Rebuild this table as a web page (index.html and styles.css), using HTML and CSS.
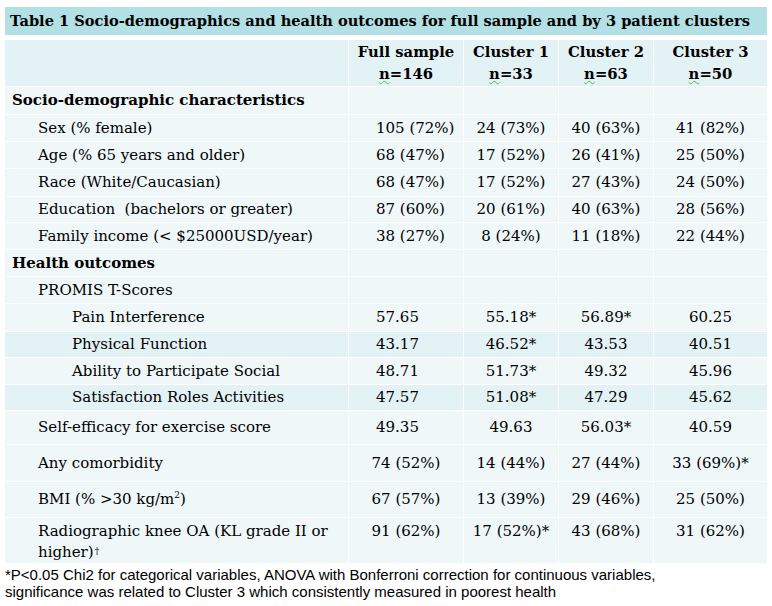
FILE: index.html
```html
<!DOCTYPE html>
<html>
<head>
<meta charset="utf-8">
<link rel="stylesheet" href="styles.css">
</head>
<body>
<div class="page">
  <div class="title">Table 1 Socio-demographics and health outcomes for full sample and by 3 patient clusters</div>
  <table class="tbl">
    <colgroup>
      <col class="c-label"><col class="c-full"><col class="c-cl"><col class="c-cl"><col class="c-cl3">
    </colgroup>
    <tr class="head">
      <th></th>
      <th>Full sample<br><span class="sq">n</span>=146</th>
      <th>Cluster 1<br><span class="sq">n</span>=33</th>
      <th>Cluster 2<br><span class="sq">n</span>=63</th>
      <th>Cluster 3<br><span class="sq">n</span>=50</th>
    </tr>
    <tr class="h28"><td class="sec">Socio-demographic characteristics</td><td></td><td></td><td></td><td></td></tr>
    <tr class="h27"><td class="l1">Sex (% female)</td><td class="fl">105 (72%)</td><td>24 (73%)</td><td>40 (63%)</td><td>41 (82%)</td></tr>
    <tr class="h27"><td class="l1">Age (% 65 years and older)</td><td class="fl">68 (47%)</td><td>17 (52%)</td><td>26 (41%)</td><td>25 (50%)</td></tr>
    <tr class="h28"><td class="l1">Race (White/Caucasian)</td><td class="fl">68 (47%)</td><td>17 (52%)</td><td>27 (43%)</td><td>24 (50%)</td></tr>
    <tr class="h26"><td class="l1">Education &nbsp;(bachelors or greater)</td><td class="fl">87 (60%)</td><td>20 (61%)</td><td>40 (63%)</td><td>28 (56%)</td></tr>
    <tr class="h27"><td class="l1">Family income (&lt; $25000USD/year)</td><td class="fl">38 (27%)</td><td>8 (24%)</td><td>11 (18%)</td><td>22 (44%)</td></tr>
    <tr class="h27"><td class="sec">Health outcomes</td><td></td><td></td><td></td><td></td></tr>
    <tr class="h27"><td class="l1">PROMIS T-Scores</td><td></td><td></td><td></td><td></td></tr>
    <tr class="h28"><td class="l2">Pain Interference</td><td class="fl">57.65</td><td>55.18*</td><td>56.89*</td><td>60.25</td></tr>
    <tr class="h26 dark"><td class="l2">Physical Function</td><td class="fl">43.17</td><td>46.52*</td><td>43.53</td><td>40.51</td></tr>
    <tr class="h27"><td class="l2">Ability to Participate Social</td><td class="fl">48.71</td><td>51.73*</td><td>49.32</td><td>45.96</td></tr>
    <tr class="h26 dark"><td class="l2">Satisfaction Roles Activities</td><td class="fl">47.57</td><td>51.08*</td><td>47.29</td><td>45.62</td></tr>
    <tr class="h34"><td class="l1">Self-efficacy for exercise score</td><td class="fl">49.35</td><td>49.63</td><td>56.03*</td><td>40.59</td></tr>
    <tr class="h37"><td class="l1">Any comorbidity</td><td>74 (52%)</td><td>14 (44%)</td><td>27 (44%)</td><td>33 (69%)*</td></tr>
    <tr class="h36"><td class="l1">BMI (% &gt;30 kg/m<span class="sup">2</span>)</td><td>67 (57%)</td><td>13 (39%)</td><td>29 (46%)</td><td>25 (50%)</td></tr>
    <tr class="h45 top"><td class="l1"><span class="ln">Radiographic knee OA (KL grade II or</span> <span class="ln">higher)<span class="sup dag">†</span></span></td><td>91 (62%)</td><td>17 (52%)*</td><td>43 (68%)</td><td>31 (62%)</td></tr>
  </table>
  <p class="note">*P&lt;0.05 Chi2 for categorical variables, ANOVA with Bonferroni correction for continuous variables, significance was related to Cluster 3 which consistently measured in poorest health</p>
</div>
</body>
</html>
```

FILE: styles.css
```css
html, body {
  margin: 0;
  padding: 0;
  background: #ffffff;
}

.page {
  padding: 7px 0 0 4px;
  width: 764px;
  color: #000000;
  font-family: "DejaVu Serif", "Liberation Serif", serif;
}

.title {
  margin-left: 1px;
  width: 757px;
  height: 28px;
  line-height: 28px;
  padding-left: 5px;
  background: #b3e0e4;
  font-weight: bold;
  font-size: 14.6px;
  white-space: nowrap;
}

.tbl {
  margin-top: 4px;
  width: 764px;
  table-layout: fixed;
  border-collapse: separate;
  border-spacing: 1px;
  font-size: 15px;
}

.c-label { width: 343px; }
.c-full { width: 114px; }
.c-cl { width: 94px; }
.c-cl3 { width: 113px; }

.tbl th,
.tbl td {
  padding: 0;
  background: #eff7f9;
  text-align: center;
  vertical-align: middle;
  white-space: nowrap;
  line-height: 21px;
}

.tbl .head th {
  height: 46px;
  background: #e3f2f4;
  font-weight: bold;
  font-size: 14.8px;
  line-height: 22px;
}

.tbl .dark td { background: #e3f2f4; }

.sq {
  text-decoration: underline wavy #5cb85c;
  text-decoration-thickness: 1px;
  text-underline-offset: 1px;
}

.h26 td { height: 25px; }
.h27 td { height: 26px; }
.h28 td { height: 27px; }
.h34 td { height: 33px; }
.h37 td { height: 36px; }
.h36 td { height: 35px; }
.h45 td { height: 44px; }

.tbl .top td {
  vertical-align: top;
  padding-top: 3px;
  height: 41px;
}

.tbl td.sec {
  text-align: left;
  font-weight: bold;
  padding-left: 7px;
}

.tbl td.l1 {
  text-align: left;
  padding-left: 33px;
  white-space: normal;
}

.ln {
  white-space: nowrap;
}

.tbl td.l2 {
  text-align: left;
  padding-left: 67px;
}

.tbl td.fl {
  text-align: left;
  padding-left: 27px;
}

.sup {
  font-size: 9px;
  vertical-align: 6px;
  line-height: 1;
}

.dag {
  vertical-align: 3px;
  padding-left: 1px;
}

.note {
  margin: 2px 0 0 1px;
  width: 672px;
  font-family: "Liberation Sans", Arial, sans-serif;
  font-size: 15px;
  line-height: 17px;
  color: #000000;
}
```
